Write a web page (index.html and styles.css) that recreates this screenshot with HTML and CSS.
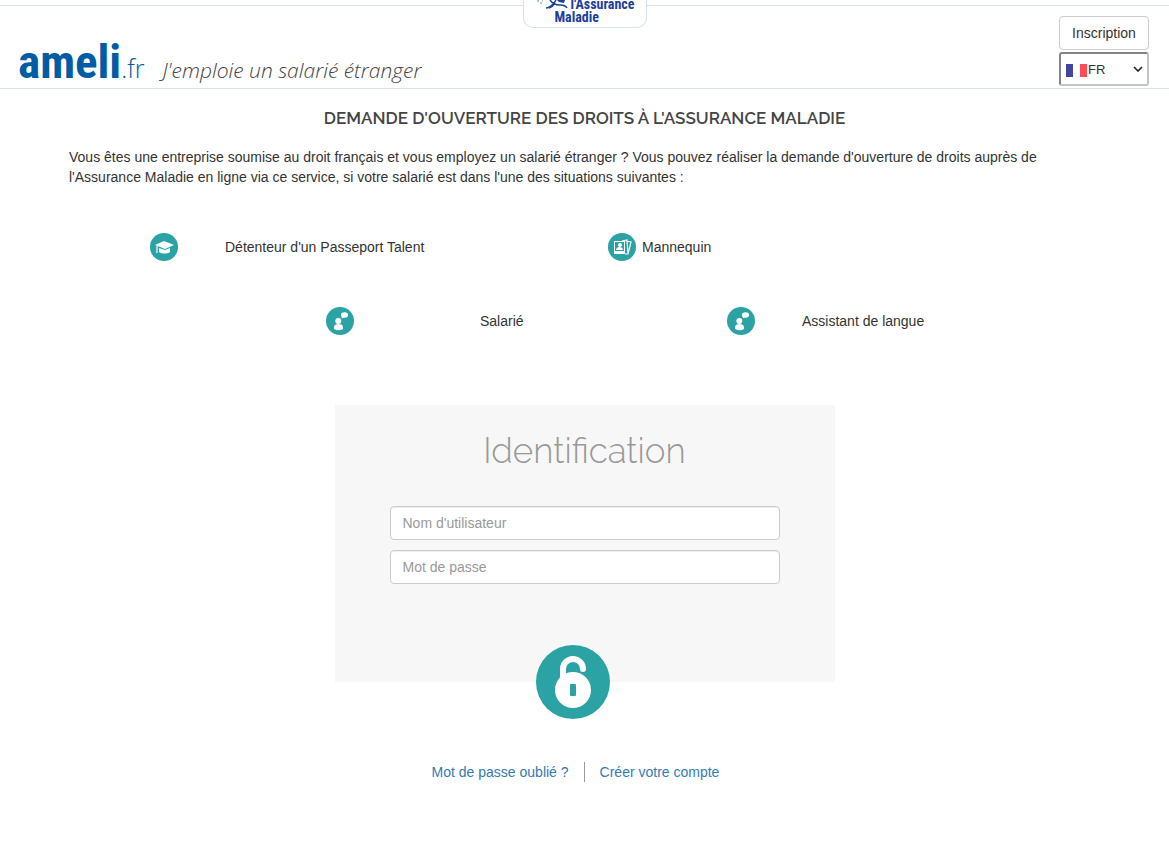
FILE: index.html
```html
<!DOCTYPE html>
<html lang="fr">
  <head>
    <meta charset="UTF-8" />
    <meta name="viewport" content="width=device-width, initial-scale=1" />
    <title>ameli.fr - J'emploie un salarié étranger</title>
    <link rel="stylesheet" href="styles.css">
  </head>
  <body>
    <header class="header">
      <a class="brand" href="#"><span class="brand-name">ameli</span><span class="brand-ext">.fr</span></a>
      <span class="tagline">J'emploie un salarié étranger</span>

      <div class="badge">
        <svg class="badge-logo" viewBox="0 0 34 9" width="34" height="9" aria-hidden="true">
          <path d="M9 8c4 0 7-3 10-8M13 0c2 3 6 5 10 5s6 1 7 3M18 3c-1 2-3 4-6 5" fill="none" stroke="#1c419a" stroke-width="1.5" />
          <path d="M20 0h8l-1 3-5-1z" fill="#1c419a" />
          <path d="M0 1h2M3 3h2M1 0h1M5 1h1" stroke="#7d90bd" />
        </svg>
        <span class="badge-top">l'Assurance</span>
        <span class="badge-bottom">Maladie</span>
      </div>

      <div class="header-actions">
        <button class="btn" type="button">Inscription</button>
        <div class="lang">
          <svg class="flag" viewBox="0 0 21 13" width="21" height="13" aria-hidden="true">
            <path fill="#41479b" d="M0 0h7v13H0z" />
            <path fill="#fff" d="M7 0h7v13H7z" />
            <path fill="#ff4b55" d="M14 0h7v13h-7z" />
          </svg>
          <select class="lang-select" aria-label="Langue">
            <option>FR</option>
            <option>EN</option>
          </select>
          <svg class="chevron" viewBox="0 0 10 6" width="10" height="6" aria-hidden="true">
            <path d="M1 1l4 4 4-4" fill="none" stroke="#222" stroke-width="1.6" />
          </svg>
        </div>
      </div>
    </header>

    <main>
      <section class="intro">
        <h1>DEMANDE D'OUVERTURE DES DROITS À L'ASSURANCE MALADIE</h1>
        <p>Vous êtes une entreprise soumise au droit français et vous employez un salarié étranger ? Vous pouvez réaliser la demande d'ouverture de droits auprès de l'Assurance Maladie en ligne via ce service, si votre salarié est dans l'une des situations suivantes :</p>
      </section>

      <section class="situations">
        <div class="row row-top">
          <svg class="icon" viewBox="0 0 28 28" aria-hidden="true">
            <circle cx="14" cy="14" r="14" fill="#2ba3a4" />
            <path fill="#fff" d="M5 12l9-4 10 4-9 4z" />
            <path fill="#fff" d="M9 15l6 2 5-2v4c-3 2-8 2-11 0z" />
            <path d="M7 13v7" stroke="#fff" stroke-width="1.2" />
          </svg>
          <span>Détenteur d'un Passeport Talent</span>
          <svg class="icon" viewBox="0 0 28 28" aria-hidden="true">
            <circle cx="14" cy="14" r="14" fill="#2ba3a4" />
            <path d="M14 8l5-1 1 13M18 8l5 1-3 12h-3" fill="none" stroke="#fff" stroke-width="1.2" />
            <path fill="#fff" fill-rule="evenodd" d="M6 8h11v13H6zM7 9v9h9V9z" />
            <circle cx="12" cy="12" r="2" fill="#fff" />
            <path fill="#fff" d="M8 17c0-4 7-4 7 0z" />
          </svg>
          <span>Mannequin</span>
        </div>
        <div class="row row-bottom">
          <svg class="icon" viewBox="0 0 28 28" aria-hidden="true">
            <circle cx="14" cy="14" r="14" fill="#2ba3a4" />
            <circle cx="12.3" cy="14" r="3" fill="#fff" />
            <path fill="#fff" d="M8 22v-2c0-4 9-4 9 0v2q-4 2.500-9 0z" />
            <ellipse cx="18.500" cy="8" rx="3.600" ry="2.700" fill="#fff" />
            <path fill="#fff" d="M16 9l-.4 2.600 2.800-1.400z" />
          </svg>
          <span>Salarié</span>
          <svg class="icon" viewBox="0 0 28 28" aria-hidden="true">
            <circle cx="14" cy="14" r="14" fill="#2ba3a4" />
            <circle cx="12.3" cy="14" r="3" fill="#fff" />
            <path fill="#fff" d="M8 22v-2c0-4 9-4 9 0v2q-4 2.500-9 0z" />
            <ellipse cx="18.500" cy="8" rx="3.600" ry="2.700" fill="#fff" />
            <path fill="#fff" d="M16 9l-.4 2.600 2.800-1.400z" />
          </svg>
          <span>Assistant de langue</span>
        </div>
      </section>

      <form class="login">
        <h2>Identification</h2>
        <input class="field" type="text" placeholder="Nom d'utilisateur" aria-label="Nom d'utilisateur" />
        <input class="field" type="password" placeholder="Mot de passe" aria-label="Mot de passe" />
        <button class="unlock" type="submit" aria-label="Se connecter">
          <svg viewBox="0 0 76 76" width="76" height="76" aria-hidden="true">
            <circle cx="38" cy="38" r="37" fill="#2ba3a4" />
            <path d="M28 34V25a10 10 0 0 1 20 0" fill="none" stroke="#fff" stroke-width="6" stroke-linecap="round" />
            <circle cx="38" cy="46" r="18" fill="#fff" />
            <rect x="35" y="40" width="6" height="12" rx="1" fill="#2ba3a4" />
          </svg>
        </button>
      </form>

      <nav class="links">
        <a href="#">Mot de passe oublié ?</a>
        <a href="#">Créer votre compte</a>
      </nav>
    </main>
  </body>
</html>
```
FILE: styles.css
```css
* {
  box-sizing: border-box;
}

body {
  margin: 0;
  font-family: "Liberation Sans", Arial, sans-serif;
  font-size: 14px;
  line-height: 20px;
  color: #333;
  background-color: #fff;
}

.header {
  position: relative;
  display: flex;
  align-items: baseline;
  gap: 18px;
  height: 84px;
  margin-top: 5px;
  padding: 10px 20px 0 18px;
  border-top: 1px solid #d8e1e8;
  border-bottom: 1px solid #d8e1e8;
}

.brand {
  color: #005ca5;
  text-decoration: none;
  line-height: 92px;
}

.brand-name {
  font-family: "Roboto Condensed", Roboto, sans-serif;
  font-size: 47px;
  font-weight: 700;
}

.brand-ext {
  font-family: "Open Sans", sans-serif;
  font-size: 25px;
  font-weight: 300;
}

.tagline {
  font-family: "Open Sans", sans-serif;
  font-size: 21px;
  font-style: italic;
  font-weight: 300;
  color: #444;
}

/* white tab hanging from the top edge of the page */
.badge {
  position: absolute;
  top: -6px;
  left: 50%;
  width: 124px;
  height: 28px;
  margin-left: -62px;
  background-color: #fff;
  border: 1px solid #d8e1e8;
  border-top: 0;
  border-radius: 0 0 10px 10px;
  font-family: "Roboto Condensed", Roboto, sans-serif;
  font-size: 14px;
  font-weight: 700;
  line-height: 12px;
  color: #1c419a;
}

.badge-logo,
.badge-top,
.badge-bottom {
  position: absolute;
}

.badge-logo {
  top: 0;
  left: 13px;
}

.badge-top {
  top: -2px;
  left: 47px;
}

.badge-bottom {
  top: 11px;
  left: 31px;
}

.header-actions {
  display: flex;
  flex-direction: column;
  align-self: flex-start;
  gap: 2px;
  width: 90px;
  margin-left: auto;
}

.btn {
  height: 34px;
  padding: 0;
  font: inherit;
  color: #333;
  background-color: #fff;
  border: 1px solid #ccc;
  border-radius: 4px;
  cursor: pointer;
}

.lang {
  position: relative;
}

.flag,
.chevron {
  position: absolute;
  pointer-events: none;
}

.flag {
  top: 12px;
  left: 7px;
}

.chevron {
  top: 14px;
  right: 6px;
}

.lang-select {
  width: 100%;
  height: 34px;
  padding: 0 20px 0 27px;
  font-family: inherit;
  font-size: 13px;
  color: #333;
  appearance: none;
  background-color: #fff;
  border: 2px solid;
  border-color: #858585 #c4c4c4 #c4c4c4 #858585;
  border-radius: 3px;
}

.intro {
  padding: 0 69px;
}

h1 {
  margin: 18px 0;
  font-family: Raleway, Lato, sans-serif;
  font-size: 17px;
  font-weight: 600;
  line-height: 22px;
  text-align: center;
  color: #444;
}

.intro p {
  margin: 0;
}

.row {
  display: grid;
  align-items: center;
}

.row-top {
  grid-template-columns: 150fr 75fr 383fr 34fr 527fr;
  margin-top: 46px;
}

.row-bottom {
  grid-template-columns: 326fr 154fr 247fr 75fr 367fr;
  margin-top: 46px;
}

.row > :first-child {
  grid-column-start: 2;
}

.row span {
  white-space: nowrap;
}

.icon {
  width: 28px;
  height: 28px;
}

.login {
  position: relative;
  display: flex;
  flex-direction: column;
  gap: 10px;
  max-width: 500px;
  margin: 70px auto 0;
  padding: 24px 55px 98px;
  background-color: #f7f7f7;
}

h2 {
  margin: 0 0 24px;
  font-family: Raleway, Lato, sans-serif;
  font-size: 35px;
  font-weight: 300;
  line-height: 43px;
  text-align: center;
  color: #999;
}

.field {
  width: 100%;
  height: 34px;
  padding: 6px 12px;
  font: inherit;
  color: #555;
  background-color: #fff;
  border: 1px solid #ccc;
  border-radius: 4px;
  box-shadow: inset 0 1px 1px rgba(0, 0, 0, 0.075);
}

.field::placeholder {
  color: #999;
}

.unlock {
  position: absolute;
  bottom: -38px;
  left: 200px;
  width: 76px;
  height: 76px;
  padding: 0;
  background: none;
  border: 0;
  border-radius: 50%;
  cursor: pointer;
}

.links {
  display: flex;
  justify-content: center;
  margin-top: 80px;
  padding-right: 18px;
}

.links a {
  padding: 0 15px;
  color: #337ab7;
  text-decoration: none;
}

.links a + a {
  border-left: 1px solid #999;
}
```
